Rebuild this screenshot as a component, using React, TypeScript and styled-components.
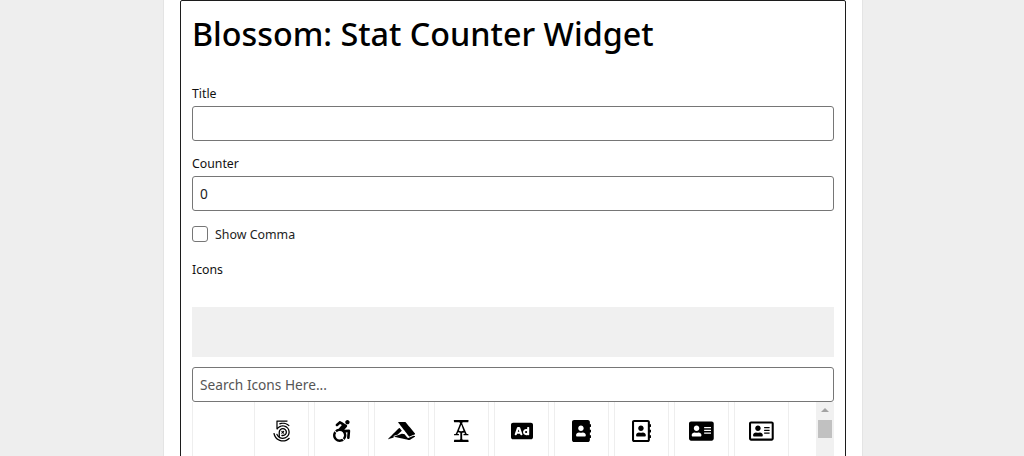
import React from "react";
import styled, { createGlobalStyle } from "styled-components";
import {
  Fa500Px,
  FaAccessibleIcon,
  FaAccusoft,
  FaAcquisitionsIncorporated,
  FaAd,
  FaAddressBook,
  FaRegAddressBook,
  FaAddressCard,
  FaRegAddressCard,
} from "react-icons/fa";

const GlobalStyle = createGlobalStyle`
  html, body {
    margin: 0;
    height: 456px;
    overflow: hidden;
    background: #eeeeee;
    font-family: "Noto Sans", "Open Sans", sans-serif;
  }
  * {
    box-sizing: border-box;
  }
`;

const Page = styled.div`
  width: 700px;
  height: 456px;
  margin-left: 163px;
  padding: 0 16px;
  background: #ffffff;
  border-left: 1px solid #e4e4e4;
  border-right: 1px solid #e4e4e4;
  overflow: hidden;
`;

const Panel = styled.div`
  border: 1px solid #1c1c1c;
  border-radius: 2px;
  padding: 0 11px 20px;
`;

const Heading = styled.h1`
  margin: 0 0 29px;
  padding-top: 9px;
  font-size: 32.3px;
  font-weight: 500;
  line-height: 46px;
  color: #000000;
`;

const Field = styled.div`
  margin-bottom: 14px;
`;

const Label = styled.label`
  display: block;
  margin-bottom: 3px;
  font-size: 12.3px;
  line-height: 18px;
  color: #111111;
`;

const TextInput = styled.input`
  display: block;
  width: 100%;
  height: 35px;
  padding: 0 7px;
  border: 1px solid #767676;
  border-radius: 3px;
  background: #ffffff;
  font-family: inherit;
  font-size: 13.7px;
  color: #222222;

  &::placeholder {
    color: #555555;
    opacity: 1;
  }
`;

const CheckRow = styled.div`
  display: flex;
  align-items: center;
  gap: 7px;
  height: 16px;
  margin: 15px 0 19px;
`;

const CheckBox = styled.span`
  width: 16px;
  height: 16px;
  border: 1px solid #767676;
  border-radius: 3px;
  background: #ffffff;
`;

const CheckLabel = styled.span`
  padding-top: 2px;
  font-size: 12.4px;
  line-height: 16px;
  color: #222222;
`;

const SelectedIcons = styled.div`
  height: 50px;
  margin: 28px 0 10px;
  background: #f0f0f0;
`;

const IconList = styled.div`
  display: flex;
  height: 300px;
`;

const IconGrid = styled.div`
  display: flex;
  flex: 1;
  flex-wrap: wrap;
  align-content: flex-start;
  overflow: hidden;
`;

const BlankCell = styled.div`
  width: 62px;
  height: 60px;
  border-left: 1px solid #eeeeee;
`;

const IconCell = styled.div<{ $glyphWidth: number }>`
  display: flex;
  align-items: flex-start;
  justify-content: center;
  width: 55px;
  height: 60px;
  margin-right: 5px;
  padding-top: 18px;
  border-left: 1px solid #eeeeee;
  border-right: 1px solid #eeeeee;
  color: #000000;

  svg {
    width: ${(p) => (p.$glyphWidth * 22) / 512}px;
    height: 22px;
  }
`;

const ScrollTrack = styled.div`
  width: 18px;
  padding: 6px 2px 0;
  background: #f1f1f1;
`;

const ScrollArrow = styled.div`
  width: 0;
  height: 0;
  margin: 0 auto 8px;
  border-left: 4px solid transparent;
  border-right: 4px solid transparent;
  border-bottom: 4px solid #a3a3a3;
`;

const ScrollThumb = styled.div`
  height: 18px;
  background: #c1c1c1;
`;

// glyph widths on the 512 unit icon height
const icons = [
  { Icon: Fa500Px, glyphWidth: 448 },
  { Icon: FaAccessibleIcon, glyphWidth: 448 },
  { Icon: FaAccusoft, glyphWidth: 640 },
  { Icon: FaAcquisitionsIncorporated, glyphWidth: 384 },
  { Icon: FaAd, glyphWidth: 512 },
  { Icon: FaAddressBook, glyphWidth: 448 },
  { Icon: FaRegAddressBook, glyphWidth: 448 },
  { Icon: FaAddressCard, glyphWidth: 576 },
  { Icon: FaRegAddressCard, glyphWidth: 576 },
];

const App = () => {
  return (
    <>
      <GlobalStyle />
      <Page>
        <Panel>
          <Heading>Blossom: Stat Counter Widget</Heading>
          <Field>
            <Label>Title</Label>
            <TextInput />
          </Field>
          <Field>
            <Label>Counter</Label>
            <TextInput defaultValue="0" />
          </Field>
          <CheckRow>
            <CheckBox />
            <CheckLabel>Show Comma</CheckLabel>
          </CheckRow>
          <Label>Icons</Label>
          <SelectedIcons />
          <TextInput placeholder="Search Icons Here..." />
          <IconList>
            <IconGrid>
              <BlankCell />
              {icons.map(({ Icon, glyphWidth }, i) => (
                <IconCell key={i} $glyphWidth={glyphWidth}>
                  <Icon />
                </IconCell>
              ))}
            </IconGrid>
            <ScrollTrack>
              <ScrollArrow />
              <ScrollThumb />
            </ScrollTrack>
          </IconList>
        </Panel>
      </Page>
    </>
  );
};

export default App;
